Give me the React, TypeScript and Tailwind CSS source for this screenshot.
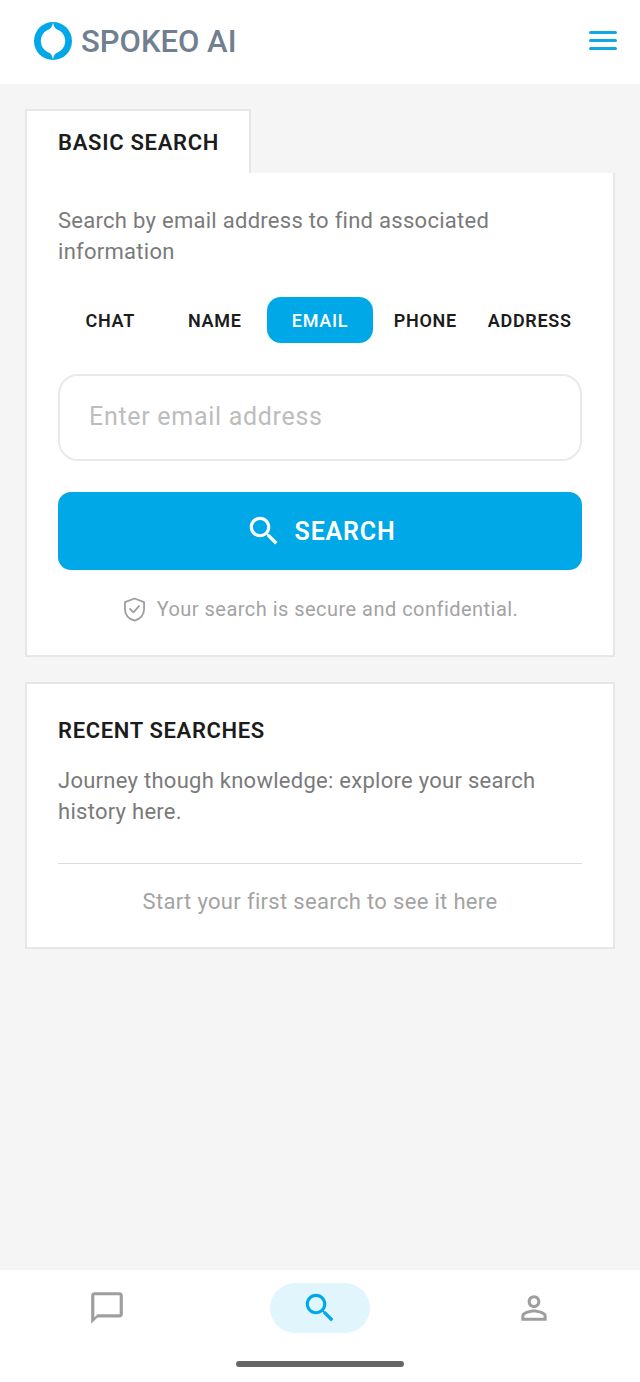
const searchPath =
  "M15.5 14h-.79l-.28-.27C15.41 12.59 16 11.11 16 9.5 16 5.91 13.09 3 9.5 3S3 5.91 3 9.5 5.91 16 9.5 16c1.61 0 3.09-.59 4.23-1.57l.27.28v.79l5 4.99L20.49 19l-4.99-5zm-6 0C7.01 14 5 11.99 5 9.5S7.01 5 9.5 5 14 7.01 14 9.5 11.99 14 9.5 14z";

export default function App() {
  const tabs = ["CHAT", "NAME", "EMAIL", "PHONE", "ADDRESS"];
  return (
    <div className="flex h-[1382px] w-[640px] flex-col overflow-hidden bg-[#f5f5f5] font-['Roboto',sans-serif]">
      <header className="flex h-[84px] shrink-0 items-center justify-between bg-white pb-[2px] pl-[34px] pr-[23px]">
        <div className="flex items-center gap-[9px]">
          <svg width="38" height="38" viewBox="0 0 38 38">
            <circle cx="19" cy="19" r="19" fill="#00a8e8" />
            <circle cx="19" cy="19" r="12.2" fill="#fff" />
            <path d="M19 0C19.4 4 21 7 25 8.8L13 8.8C17 7 18.6 4 19 0Z" fill="#fff" />
            <path d="M19 38C19.4 34 21 31 25 29.2L13 29.2C17 31 18.6 34 19 38Z" fill="#fff" />
          </svg>
          <span className="text-[31px] font-medium leading-none text-[#708090]">SPOKEO AI</span>
        </div>
        <div className="-mt-[1px] flex w-[28px] flex-col gap-[5px]">
          <div className="h-[3px] rounded-full bg-[#0ea8e2]" />
          <div className="h-[3px] rounded-full bg-[#0ea8e2]" />
          <div className="h-[3px] rounded-full bg-[#0ea8e2]" />
        </div>
      </header>

      <main className="flex flex-1 flex-col px-[25px] pt-[25px]">
        <div className="flex h-[64px] w-[226px] items-start border-2 border-b-0 border-[#e6e6e6] bg-white pl-[31px] pt-[19px]">
          <span className="text-[22px] font-semibold leading-[26px] tracking-[0.7px] text-[#1c1c1c]">BASIC SEARCH</span>
        </div>
        <section className="h-[484px] border-2 border-t-0 border-[#e6e6e6] bg-white px-[31px] pt-[32px]">
          <p className="text-[22px] leading-[31px] tracking-[0.28px] text-[#7a7a7a]">
            Search by email address to find associated information
          </p>
          <div className="mt-[30px] flex h-[46px] items-center">
            {tabs.map((t) => (
              <div
                key={t}
                className={
                  t === "EMAIL"
                    ? "flex h-[46px] w-[106px] items-center justify-center rounded-[14px] bg-[#00a8e8] text-[18px] font-medium tracking-[0.7px] text-white"
                    : "flex h-[46px] flex-1 items-center justify-center text-[18px] font-semibold tracking-[0.7px] text-[#1c1c1c]"
                }
              >
                {t}
              </div>
            ))}
          </div>
          <div className="mt-[31px] flex h-[87px] items-center rounded-[20px] border-2 border-[#e9e9e9] pb-[2px] pl-[29px] text-[25px] tracking-[0.7px] text-[#bdbdbd]">
            Enter email address
          </div>
          <div className="mt-[31px] flex h-[78px] items-center justify-center gap-[12px] rounded-[13px] bg-[#00a8e8]">
            <svg width="38" height="38" viewBox="0 0 24 24" fill="#fff">
              <path d={searchPath} />
            </svg>
            <span className="pt-[2px] text-[25px] font-semibold tracking-[0.8px] text-white">SEARCH</span>
          </div>
          <div className="mt-[24px] flex items-center justify-center gap-[9px] pr-[1px]">
            <svg width="27" height="27" viewBox="0 0 24 24" fill="none" stroke="#9e9e9e" strokeWidth="1.6" strokeLinejoin="round" strokeLinecap="round">
              <path d="M12 2.2 20.5 5.4V11.5C20.5 16.5 17 20.3 12 21.8 7 20.3 3.5 16.5 3.5 11.5V5.4Z" />
              <path d="M8 11.5 11 14.5 16 9" />
            </svg>
            <span className="text-[20px] tracking-[0.47px] text-[#a3a3a3]">Your search is secure and confidential.</span>
          </div>
        </section>

        <section className="mt-[25px] h-[267px] border-2 border-[#e6e6e6] bg-white px-[31px] pt-[34px]">
          <h2 className="text-[22px] font-semibold leading-[26px] tracking-[0.65px] text-[#1c1c1c]">RECENT SEARCHES</h2>
          <p className="mt-[21px] text-[22px] leading-[31px] tracking-[0.27px] text-[#7a7a7a]">
            Journey though knowledge: explore your search history here.
          </p>
          <div className="mt-[36px] h-px bg-[#dcdcdc]" />
          <p className="mt-[24px] text-center text-[22px] leading-[28px] tracking-[0.33px] text-[#a3a3a3]">
            Start your first search to see it here
          </p>
        </section>
      </main>

      <nav className="relative flex h-[112px] shrink-0 items-start justify-between bg-white pt-[13px]">
        <div className="flex h-[50px] w-[213px] items-center justify-center">
          <svg width="38" height="38" viewBox="0 0 24 24" fill="#9e9e9e">
            <path d="M20 2H4c-1.1 0-2 .9-2 2v18l4-4h14c1.1 0 2-.9 2-2V4c0-1.1-.9-2-2-2zm0 14H6l-2 2V4h16v12z" />
          </svg>
        </div>
        <div className="flex h-[50px] w-[100px] items-center justify-center rounded-full bg-[#e1f5fd]">
          <svg width="38" height="38" viewBox="0 0 24 24" fill="#00a8e8">
            <path d={searchPath} />
          </svg>
        </div>
        <div className="flex h-[50px] w-[213px] items-center justify-center">
          <svg width="38" height="38" viewBox="0 0 24 24" fill="#9e9e9e">
            <path d="M12 5.9c1.16 0 2.1.94 2.1 2.1s-.94 2.1-2.1 2.1S9.9 9.16 9.9 8s.94-2.1 2.1-2.1m0 9c2.97 0 6.1 1.46 6.1 2.1v1.1H5.9V17c0-.64 3.13-2.1 6.1-2.1M12 4C9.79 4 8 5.79 8 8s1.79 4 4 4 4-1.79 4-4-1.79-4-4-4zm0 9c-2.67 0-8 1.34-8 4v3h16v-3c0-2.66-5.33-4-8-4z" />
          </svg>
        </div>
        <div className="absolute bottom-[15px] left-[236px] h-[6px] w-[168px] rounded-full bg-[#666]" />
      </nav>
    </div>
  );
}
